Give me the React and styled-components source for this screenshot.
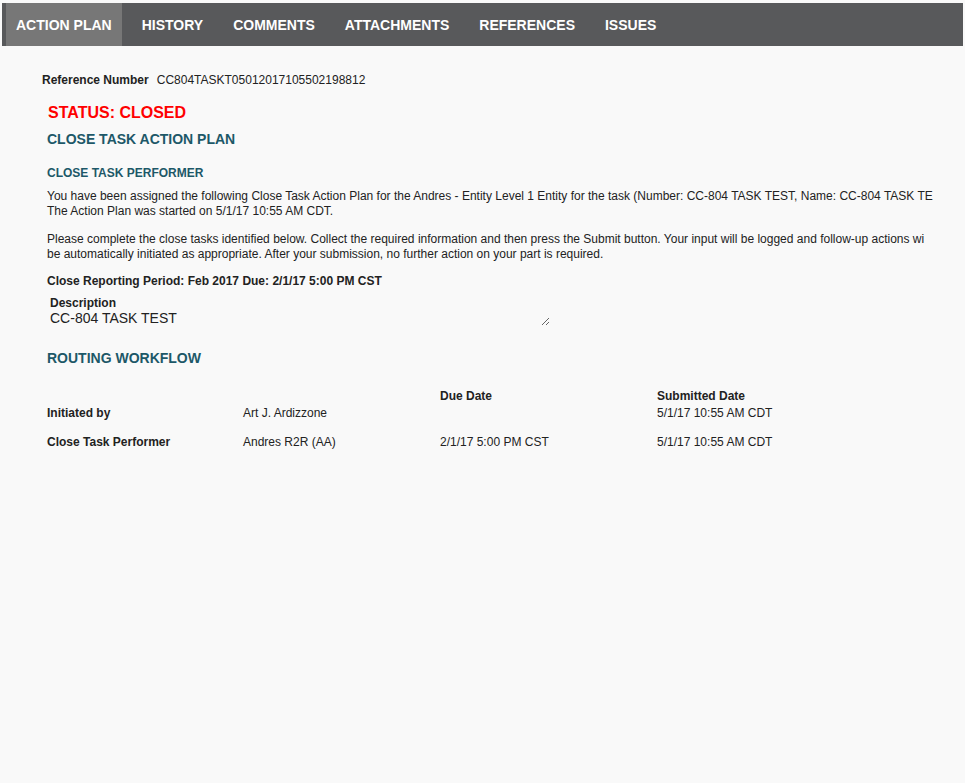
import styled, { createGlobalStyle } from "styled-components"

const GlobalStyle = createGlobalStyle`
    html, body {
        margin: 0;
        padding: 0;
        background-color: #f9f9f9;
        font-family: "Liberation Sans", Arial, sans-serif;
        color: #222;
    }
`

const tabs = ["ACTION PLAN", "HISTORY", "COMMENTS", "ATTACHMENTS", "REFERENCES", "ISSUES"]

const workflow = [
    { role: "Initiated by", name: "Art J. Ardizzone", due: "", submitted: "5/1/17 10:55 AM CDT" },
    { role: "Close Task Performer", name: "Andres R2R (AA)", due: "2/1/17 5:00 PM CST", submitted: "5/1/17 10:55 AM CDT" },
]

const App = () => {
    return (
        <Page>
            <GlobalStyle />
            <TabBar>
                {tabs.map((t, i) => (
                    <Tab key={t} active={i === 0}>{t}</Tab>
                ))}
            </TabBar>

            <Content>
                <RefRow>
                    <b>Reference Number</b>
                    <span>CC804TASKT05012017105502198812</span>
                </RefRow>

                <Status>STATUS: CLOSED</Status>
                <Heading>CLOSE TASK ACTION PLAN</Heading>
                <SubHeading>CLOSE TASK PERFORMER</SubHeading>

                {/* the page cuts these lines at its right edge */}
                <Para>
                    <Line>You have been assigned the following Close Task Action Plan for the Andres - Entity Level 1 Entity for the task (Number: CC-804 TASK TEST, Name: CC-804 TASK TE</Line>
                    <Line>The Action Plan was started on 5/1/17 10:55 AM CDT.</Line>
                </Para>
                <Para>
                    <Line>Please complete the close tasks identified below. Collect the required information and then press the Submit button. Your input will be logged and follow-up actions wi</Line>
                    <Line>be automatically initiated as appropriate. After your submission, no further action on your part is required.</Line>
                </Para>

                <Period>Close Reporting Period: Feb 2017 Due: 2/1/17 5:00 PM CST</Period>

                <Field>
                    <FieldLabel>Description</FieldLabel>
                    <TextBox readOnly defaultValue="CC-804 TASK TEST" />
                </Field>

                <Heading spaced>ROUTING WORKFLOW</Heading>

                <Table>
                    <HeadCell />
                    <HeadCell />
                    <HeadCell>Due Date</HeadCell>
                    <HeadCell>Submitted Date</HeadCell>
                    {workflow.map((w) => (
                        <Row key={w.role}>
                            <Cell bold>{w.role}</Cell>
                            <Cell>{w.name}</Cell>
                            <Cell>{w.due}</Cell>
                            <Cell>{w.submitted}</Cell>
                        </Row>
                    ))}
                </Table>
            </Content>
        </Page>
    )
}
export default App

const Page = styled.div`
    padding: 3px 2px 0 2px;
    min-height: 783px;
    box-sizing: border-box;
`
const TabBar = styled.div`
    display: flex;
    height: 43px;
    background-color: #58595b;
    padding-left: 4px;
`
const Tab = styled.div`
    display: flex;
    align-items: center;
    padding: 0 10px;
    margin-right: 10px;
    font-size: 14px;
    font-weight: bold;
    color: #fff;
    background-color: ${(p) => (p.active ? "#777777" : "transparent")};
    white-space: nowrap;
`
const Content = styled.div`
    width: 940px;
    overflow: hidden;
    padding: 26px 0 0 45px;
    box-sizing: border-box;
    font-size: 12px;
`
const RefRow = styled.div`
    display: flex;
    gap: 8px;
    margin-left: -5px;
    line-height: 16px;
`
const Status = styled.div`
    margin-top: 16px;
    margin-left: 1px;
    font-size: 16px;
    font-weight: bold;
    color: #ff0000;
    line-height: 18px;
`
const Heading = styled.div`
    margin-top: ${(p) => (p.spaced ? "23px" : "8px")};
    font-size: 14px;
    font-weight: bold;
    color: #1d5868;
    line-height: 18px;
`
const SubHeading = styled.div`
    margin-top: 18px;
    font-size: 12px;
    font-weight: bold;
    color: #1d5868;
    line-height: 14px;
`
const Para = styled.div`
    margin-top: 9px;
    & + & {
        margin-top: 13px;
    }
`
const Line = styled.div`
    white-space: nowrap;
    line-height: 15px;
`
const Period = styled.div`
    margin-top: 12px;
    font-weight: bold;
    line-height: 14px;
`
const Field = styled.div`
    margin-top: 9px;
    margin-left: 3px;
    display: flex;
    flex-direction: column;
`
const FieldLabel = styled.div`
    font-weight: bold;
    line-height: 13px;
`
const TextBox = styled.textarea`
    width: 500px;
    height: 16px;
    padding: 0;
    margin: 0;
    border: none;
    background: transparent;
    font-family: "Liberation Sans", Arial, sans-serif;
    font-size: 14px;
    line-height: 16px;
    color: #222;
    outline: none;
    resize: both;
`
const Table = styled.div`
    display: grid;
    grid-template-columns: 196px 197px 217px 200px;
    margin-top: 22px;
`
const HeadCell = styled.div`
    font-weight: bold;
    line-height: 14px;
`
const Row = styled.div`
    display: contents;
`
const Cell = styled.div`
    font-weight: ${(p) => (p.bold ? "bold" : "normal")};
    line-height: 14px;
    padding-top: 3px;
    padding-bottom: 12px;
`
